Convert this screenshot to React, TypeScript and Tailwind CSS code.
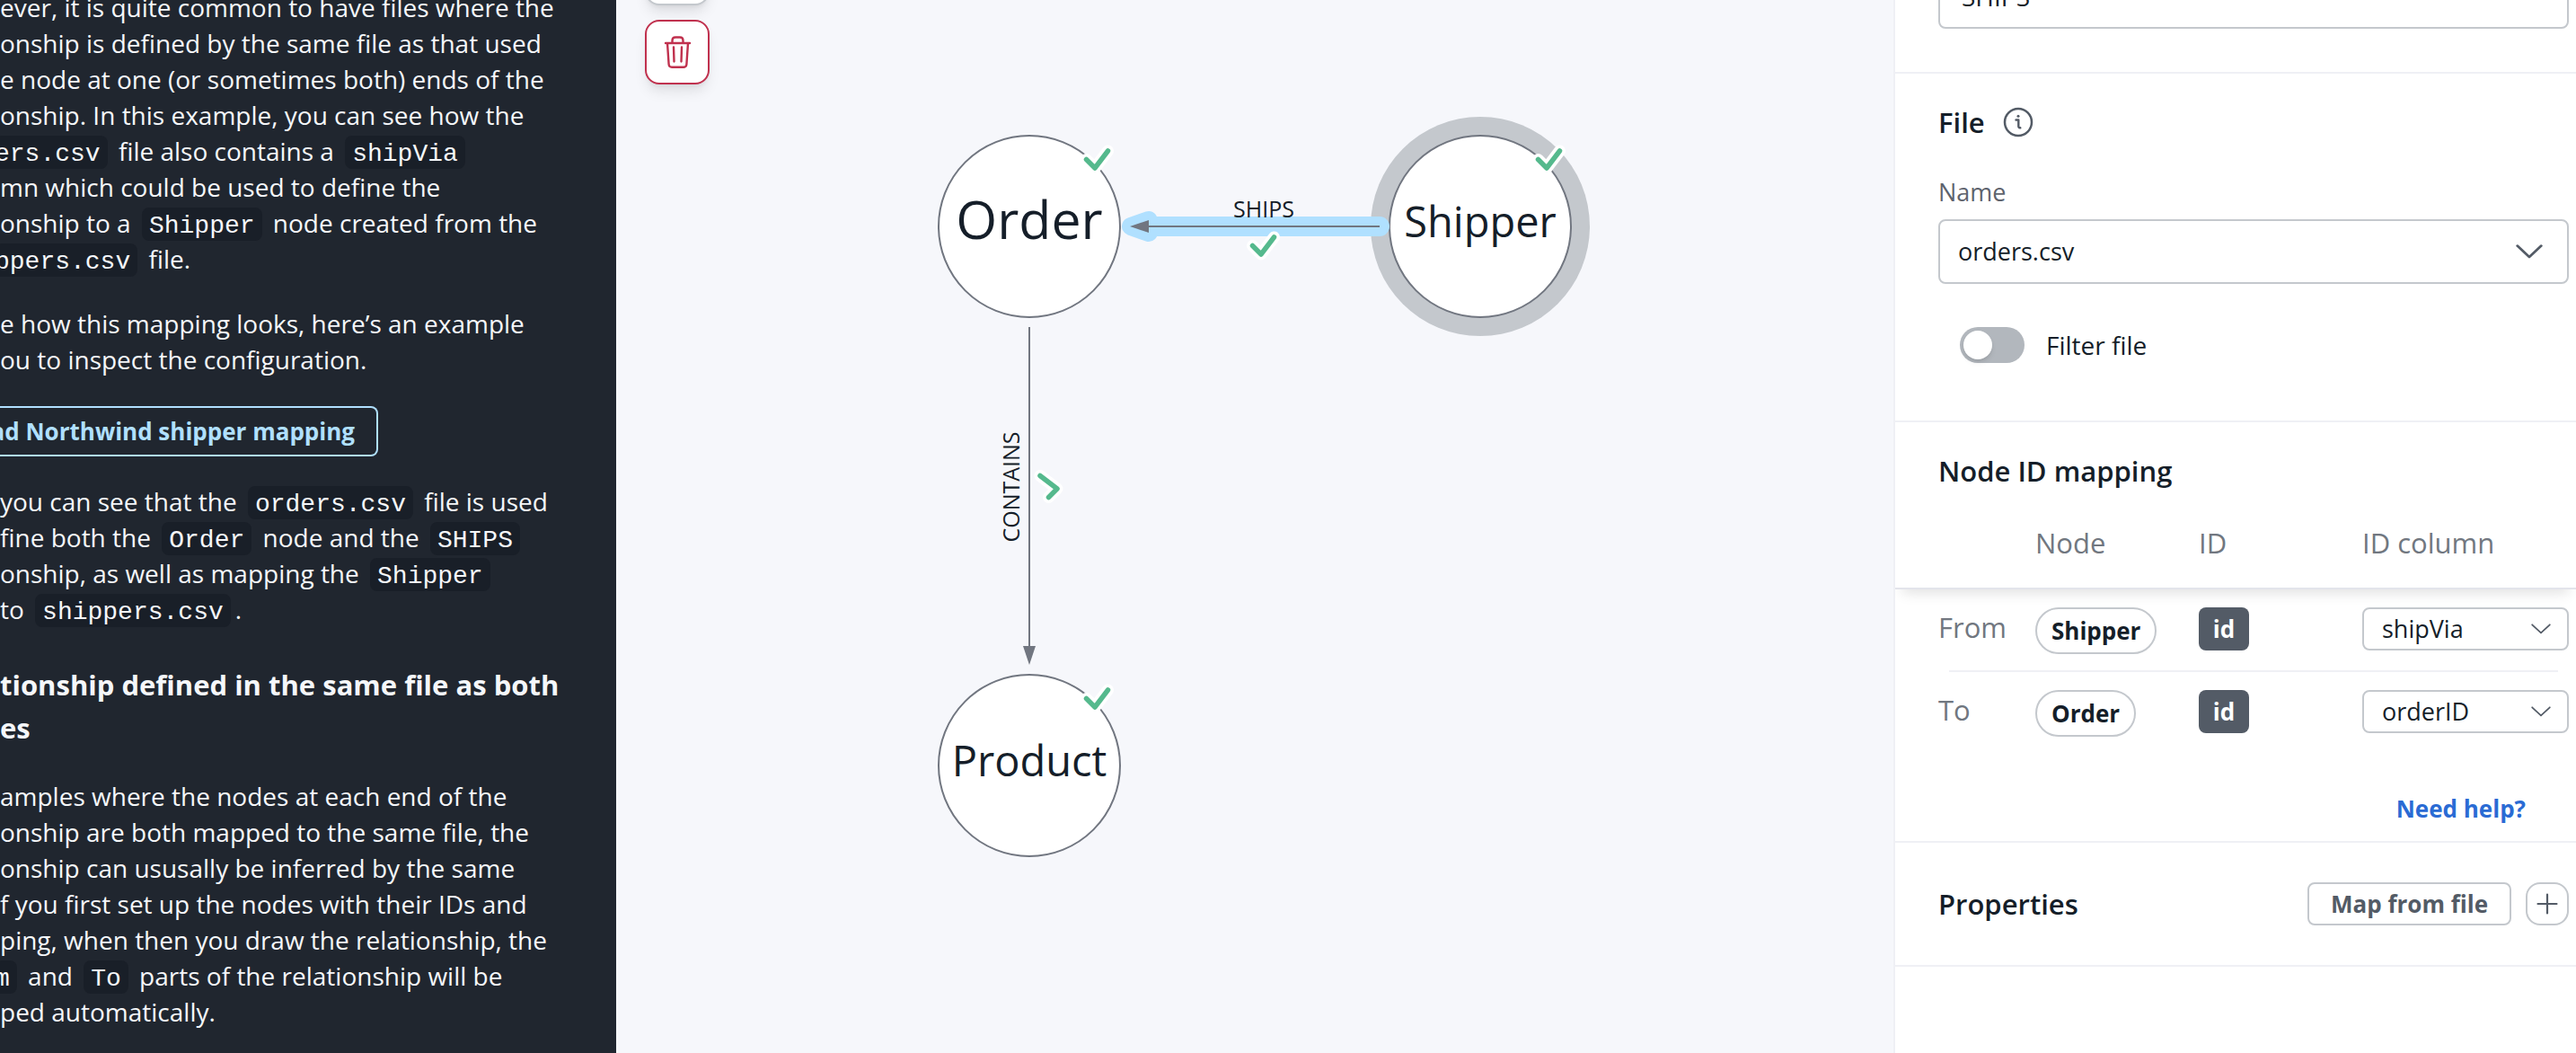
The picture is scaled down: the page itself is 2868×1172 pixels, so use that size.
import type { ReactNode } from "react";

function Code({ children, edge }: { children: ReactNode; edge?: boolean }) {
  return (
    <code className={`${edge ? "mr-[5px] -ml-1.5 pr-2" : "mx-[5px] px-2"} rounded-lg bg-[#191f28] pt-[5px] pb-px font-['Liberation_Mono',monospace] text-[28px] leading-none`}>
      {children}
    </code>
  );
}

function Chevron({ className, thin }: { className: string; thin?: boolean }) {
  return (
    <svg viewBox="0 0 28 15" fill="none" stroke="#535b66" strokeWidth={thin ? 2.2 : 2.6} strokeLinecap="round" strokeLinejoin="round" className={className} aria-hidden="true">
      <path d="M1.5 1.5 14 13.2 26.5 1.5" />
    </svg>
  );
}

function Guide() {
  return (
    <aside className="w-[686px] shrink-0 overflow-hidden bg-[#20262f] text-[28px] leading-10 text-[#f5f7fa]">
      <div className="-mt-3 whitespace-nowrap">
        <p>
          ever, it is quite common to have files where the<br />
          onship is defined by the same file as that used<br />
          e node at one (or sometimes both) ends of the<br />
          onship. In this example, you can see how the<br />
          <Code edge>ers.csv</Code> file also contains a <Code>shipVia</Code><br />
          mn which could be used to define the<br />
          onship to a <Code>Shipper</Code> node created from the<br />
          <Code edge>ppers.csv</Code> file.
        </p>
        <p className="mt-8">
          e how this mapping looks, here’s an example<br />
          ou to inspect the configuration.
        </p>
        <button type="button" className="mt-8 flex h-14 w-[421px] items-center justify-end rounded-r-lg border-2 border-l-0 border-[#b0e0ff] pr-6 text-[26px] font-bold text-[#b0e0ff]">
          ad Northwind shipper mapping
        </button>
        <p className="mt-[30px]">
          you can see that the <Code>orders.csv</Code> file is used<br />
          fine both the <Code>Order</Code> node and the <Code>SHIPS</Code><br />
          onship, as well as mapping the <Code>Shipper</Code><br />
          to <Code>shippers.csv</Code>.
        </p>
        <h3 className="mt-10 text-[31px] leading-[48px] font-bold">
          tionship defined in the same file as both<br />
          es
        </h3>
        <p className="mt-8">
          amples where the nodes at each end of the<br />
          onship are both mapped to the same file, the<br />
          onship can ususally be inferred by the same<br />
          f you first set up the nodes with their IDs and<br />
          ping, when then you draw the relationship, the<br />
          <Code edge>m</Code> and <Code>To</Code> parts of the relationship will be<br />
          ped automatically.
        </p>
      </div>
    </aside>
  );
}

function Check({ x, y, turned }: { x: number; y: number; turned?: boolean }) {
  const d = "M-9.5 -9.5 0 0 14.5 -19";
  return (
    <g transform={`translate(${x} ${y})${turned ? " rotate(-90)" : ""}`} fill="none" strokeLinecap="round" strokeLinejoin="round">
      <path d={d} stroke="#fff" strokeWidth="13" />
      <path d={d} stroke="#55b98d" strokeWidth="5.5" />
    </g>
  );
}

function GraphNode({ x, y, label, size, drop, selected }: { x: number; y: number; label: string; size: number; drop: number; selected?: boolean }) {
  return (
    <g>
      {selected && <circle cx={x} cy={y} r="122" fill="#c4c8cd" />}
      <circle cx={x} cy={y} r="101" fill="#fff" stroke="#717680" strokeWidth="2" />
      <text x={x} y={y + drop} fontSize={size} textAnchor="middle" fill="#151e29">{label}</text>
    </g>
  );
}

function Canvas() {
  return (
    <main className="relative min-w-0 flex-1 overflow-hidden bg-[#f6f7fb]">
      <svg className="absolute inset-0 size-full" role="img" aria-label="Graph model">
        <GraphNode x={962} y={252} label="Shipper" size={47} drop={12} selected />
        <GraphNode x={460} y={252} label="Order" size={59} drop={14} />
        <GraphNode x={460} y={852} label="Product" size={47} drop={12} />

        <g stroke="#b0e0ff" fill="#b0e0ff" strokeLinejoin="round" strokeLinecap="round">
          <path d="M593 252H850" strokeWidth="22" />
          <path d="M573 252 593 245V259Z" strokeWidth="20" />
        </g>
        <path d="M590 252H850" stroke="#717680" strokeWidth="2" />
        <path d="M572 252 593 245V259Z" fill="#717680" />
        <text x="721" y="242" fontSize="25" textAnchor="middle" fill="#151e29">SHIPS</text>

        <path d="M460 364V722" stroke="#717680" strokeWidth="2" />
        <path d="M460 740 453 719H467Z" fill="#717680" />
        <text transform="translate(449 542) rotate(-90)" fontSize="25" textAnchor="middle" fill="#151e29">CONTAINS</text>

        <Check x={533} y={187} />
        <Check x={1036} y={187} />
        <Check x={533} y={787} />
        <Check x={718} y={283} />
        <Check x={491} y={544} turned />
      </svg>

      <div className="flex flex-col items-start gap-4 pl-8">
        <button type="button" aria-label="Redo" className="-mt-[66px] size-[72px] rounded-2xl border-2 border-[#c4c8cd] bg-white shadow-lg" />
        <button type="button" aria-label="Delete" className="relative size-[72px] rounded-2xl border-2 border-[#c0314e] bg-white shadow-lg">
          <svg viewBox="2 2 68 68" fill="none" stroke="#c0314e" strokeWidth="2.4" strokeLinecap="round" strokeLinejoin="round" className="size-full" aria-hidden="true">
            <path d="M23 26H50M25 26 26.6 49.5Q26.9 52.8 30 52.8H43Q46.1 52.8 46.4 49.5L48 26M30.5 25.5V23Q30.5 19.5 34 19.5H39Q42.5 19.5 42.5 23V25.5M32 30.500 32.500 46.500M41 30.500 40.500 46.500" />
          </svg>
        </button>
      </div>
    </main>
  );
}

function MappingRow({ side, node, column }: { side: string; node: string; column: string }) {
  return (
    <tr className="h-[90px]">
      <th scope="row" className="pt-5 pl-12 text-left align-top text-[31px] leading-[44px] font-normal text-[#717780]">{side}</th>
      <td className="pt-5 align-top">
        <span className="inline-flex h-[52px] items-center rounded-full border-2 border-[#c4c8cd] px-4 text-[26px] font-bold text-[#151e29]">{node}</span>
      </td>
      <td className="pt-5 align-top">
        <span className="inline-flex h-12 w-14 items-center justify-center rounded-lg bg-[#535b66] text-[26px] font-bold text-white">id</span>
      </td>
      <td className="pt-5 pr-2 align-top">
        <div className="relative">
          <select aria-label={`${side} ID column`} defaultValue={column} className="block h-12 w-full appearance-none rounded-lg border-2 border-[#c4c8cd] bg-white px-5 text-[27px] leading-10 text-[#151e29]">
            <option>{column}</option>
          </select>
          <Chevron thin className="pointer-events-none absolute top-[18px] right-5 h-3 w-[22px]" />
        </div>
      </td>
    </tr>
  );
}

const heading = "flex h-11 items-center text-[31px] font-semibold text-[#151e29]";

function Inspector() {
  return (
    <aside className="w-[760px] shrink-0 overflow-hidden border-l-2 border-[#eff0f5] bg-white text-[#151e29]">
      <section className="border-b-2 border-[#eff0f5] pr-2 pb-12 pl-12">
        <input aria-label="Type" defaultValue="SHIPS" className="-mt-10 block h-[72px] w-full rounded-lg border-2 border-[#c4c8cd] px-6 text-[28px]" />
      </section>

      <section className="border-b-2 border-[#eff0f5] pt-8 pr-2 pb-16 pl-12">
        <h2 className={heading}>
          File
          <svg viewBox="0 0 34 34" fill="none" stroke="#535b66" strokeLinecap="round" strokeLinejoin="round" className="ml-5 size-[34px]" role="img" aria-label="Information">
            <circle cx="17" cy="17" r="15" strokeWidth="2.5" />
            <path d="M14.5 14.5H17.3V21.5Q17.3 23.5 19.3 23.3" strokeWidth="2.4" />
            <circle cx="17" cy="10.3" r="1.5" fill="#535b66" stroke="none" />
          </svg>
        </h2>
        <label htmlFor="file-name" className="mt-9 block text-[27px] leading-10 text-[#5e636d]">Name</label>
        <div className="relative mt-2.5">
          <select id="file-name" defaultValue="orders.csv" className="block h-[72px] w-full appearance-none rounded-lg border-2 border-[#c4c8cd] bg-white px-5 text-[27px]">
            <option>orders.csv</option>
          </select>
          <Chevron className="pointer-events-none absolute top-7 right-[29px] h-4 w-[30px]" />
        </div>
        <label className="mt-12 ml-6 flex h-10 w-fit items-center gap-6 text-[28px]">
          <input type="checkbox" role="switch" className="h-10 w-[72px] appearance-none rounded-full bg-[#b2b7bd] p-1 before:block before:size-8 before:rounded-full before:bg-white before:shadow-md checked:bg-[#2a6bd4] checked:before:ml-8" />
          Filter file
        </label>
      </section>

      <section className="border-b-2 border-[#eff0f5] pt-8 pb-4">
        <h2 className={`${heading} pl-12`}>Node ID mapping</h2>
        <table className="w-full table-fixed border-separate border-spacing-0">
          <colgroup>
            <col className="w-[156px]" />
            <col className="w-[182px]" />
            <col className="w-[182px]" />
            <col />
          </colgroup>
          <thead className="text-left text-[31px] text-[#717780] shadow-[0_12px_14px_-8px_rgba(0,0,0,0.12)]">
            <tr className="h-[110px]">
              <td className="border-b-2 border-[#e3e4eb]" />
              <th scope="col" className="border-b-2 border-[#e3e4eb] pt-2 font-normal">Node</th>
              <th scope="col" className="border-b-2 border-[#e3e4eb] pt-2 font-normal">ID</th>
              <th scope="col" className="border-b-2 border-[#e3e4eb] pt-2 font-normal">ID column</th>
            </tr>
          </thead>
          <tbody>
            <MappingRow side="From" node="Shipper" column="shipVia" />
            <tr aria-hidden="true">
              <td colSpan={4}>
                <div className="mr-5 ml-[60px] h-0.5 bg-[#eff0f5]" />
              </td>
            </tr>
            <MappingRow side="To" node="Order" column="orderID" />
          </tbody>
        </table>
        <div className="mt-[42px] flex justify-end pr-14">
          <a href="#help" className="text-[26px] leading-10 font-bold text-[#2a6bd4]">Need help?</a>
        </div>
      </section>

      <section className="flex items-center border-b-2 border-[#eff0f5] py-11 pr-2 pl-12">
        <h2 className={`${heading} flex-1`}>Properties</h2>
        <button type="button" className="h-12 rounded-lg border-2 border-[#c4c8cd] px-6 text-[26px] leading-10 font-bold text-[#535b66]">Map from file</button>
        <button type="button" aria-label="Add property" className="ml-4 flex size-12 items-center justify-center rounded-2xl border-2 border-[#c4c8cd]">
          <svg viewBox="0 0 24 24" stroke="#535b66" strokeWidth="2.2" strokeLinecap="round" className="size-6" aria-hidden="true">
            <path d="M12 1.5V22.5M1.5 12H22.5" />
          </svg>
        </button>
      </section>
    </aside>
  );
}

export default function App() {
  return (
    <div className="flex h-screen overflow-hidden font-['Open_Sans','Noto_Sans',sans-serif]">
      <Guide />
      <Canvas />
      <Inspector />
    </div>
  );
}
